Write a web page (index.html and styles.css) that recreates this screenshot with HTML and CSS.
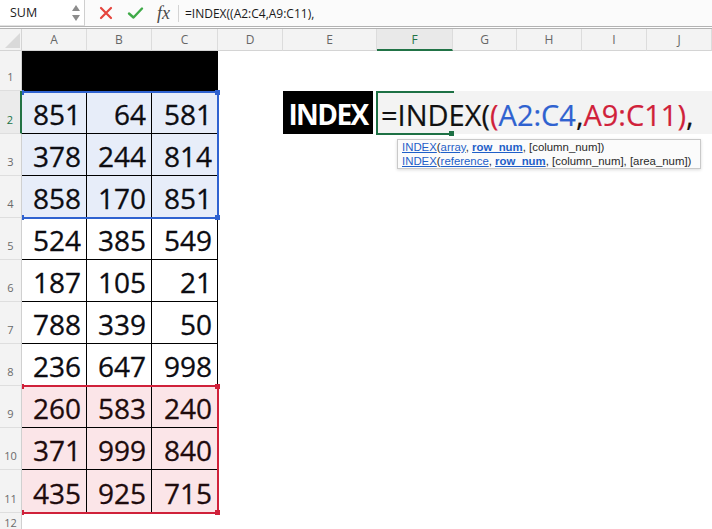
FILE: index.html
```html
<!DOCTYPE html>
<html>
<head>
<meta charset="utf-8">
<link rel="stylesheet" href="styles.css">
</head>
<body>
<div class="fbar">
  <div class="namebox">
    <span class="nm">SUM</span>
    <svg class="spin" width="10" height="22" viewBox="0 0 10 22"><polygon points="1,9 5,3 9,9" fill="#8c8c8c"/><polygon points="1,13 9,13 5,19" fill="#8c8c8c"/></svg>
  </div>
  <svg class="xicon" width="14" height="14" viewBox="0 0 14 14"><path d="M2 2 L12 12 M12 2 L2 12" stroke="#e5453d" stroke-width="2.2" stroke-linecap="round" fill="none"/></svg>
  <svg class="check" width="17" height="14" viewBox="0 0 17 14"><path d="M2 7.5 L6.5 11.5 L15 2.5" stroke="#3faa48" stroke-width="2.4" stroke-linecap="round" stroke-linejoin="round" fill="none"/></svg>
  <span class="fx">fx</span>
  <span class="sep"></span>
  <span class="ftext">=INDEX((A2:C4,A9:C11),</span>
</div>

<div class="sheet">
  <div class="row hdr">
    <div class="corner"><svg width="22" height="21" viewBox="0 0 22 21"><polygon points="5,19 20,19 20,4" fill="#d9d9d9"/></svg></div>
    <div class="ch">A</div><div class="ch">B</div><div class="ch">C</div><div class="ch">D</div><div class="ch">E</div><div class="ch act">F</div><div class="ch">G</div><div class="ch">H</div><div class="ch">I</div><div class="ch">J</div>
  </div>

  <div class="row r1">
    <div class="rh">1</div><div class="c blk"></div><div class="c blk"></div><div class="c blk"></div><div class="c"></div><div class="c"></div><div class="c"></div><div class="c"></div><div class="c"></div><div class="c"></div><div class="c"></div>
  </div>

  <div class="row r43">
    <div class="rh act">2</div><div class="c num bl">851</div><div class="c num bl">64</div><div class="c num bl">581</div><div class="c"></div><div class="c title">INDEX</div><div class="c"></div><div class="c"></div><div class="c"></div><div class="c"></div><div class="c"></div>
  </div>
  <div class="row r42">
    <div class="rh">3</div><div class="c num bl">378</div><div class="c num bl">244</div><div class="c num bl">814</div><div class="c"></div><div class="c"></div><div class="c"></div><div class="c"></div><div class="c"></div><div class="c"></div><div class="c"></div>
  </div>
  <div class="row r42">
    <div class="rh">4</div><div class="c num bl">858</div><div class="c num bl">170</div><div class="c num bl">851</div><div class="c"></div><div class="c"></div><div class="c"></div><div class="c"></div><div class="c"></div><div class="c"></div><div class="c"></div>
  </div>
  <div class="row r42">
    <div class="rh">5</div><div class="c num">524</div><div class="c num">385</div><div class="c num">549</div><div class="c"></div><div class="c"></div><div class="c"></div><div class="c"></div><div class="c"></div><div class="c"></div><div class="c"></div>
  </div>
  <div class="row r42">
    <div class="rh">6</div><div class="c num">187</div><div class="c num">105</div><div class="c num">21</div><div class="c"></div><div class="c"></div><div class="c"></div><div class="c"></div><div class="c"></div><div class="c"></div><div class="c"></div>
  </div>
  <div class="row r42">
    <div class="rh">7</div><div class="c num">788</div><div class="c num">339</div><div class="c num">50</div><div class="c"></div><div class="c"></div><div class="c"></div><div class="c"></div><div class="c"></div><div class="c"></div><div class="c"></div>
  </div>
  <div class="row r42">
    <div class="rh">8</div><div class="c num">236</div><div class="c num">647</div><div class="c num">998</div><div class="c"></div><div class="c"></div><div class="c"></div><div class="c"></div><div class="c"></div><div class="c"></div><div class="c"></div>
  </div>
  <div class="row r42">
    <div class="rh">9</div><div class="c num pk">260</div><div class="c num pk">583</div><div class="c num pk">240</div><div class="c"></div><div class="c"></div><div class="c"></div><div class="c"></div><div class="c"></div><div class="c"></div><div class="c"></div>
  </div>
  <div class="row r42">
    <div class="rh">10</div><div class="c num pk">371</div><div class="c num pk">999</div><div class="c num pk">840</div><div class="c"></div><div class="c"></div><div class="c"></div><div class="c"></div><div class="c"></div><div class="c"></div><div class="c"></div>
  </div>
  <div class="row r43">
    <div class="rh">11</div><div class="c num pk">435</div><div class="c num pk">925</div><div class="c num pk">715</div><div class="c"></div><div class="c"></div><div class="c"></div><div class="c"></div><div class="c"></div><div class="c"></div><div class="c"></div>
  </div>
  <div class="row r12">
    <div class="rh last">12</div>
  </div>
</div>

<div class="range blue"><span class="h tl"></span><span class="h tr"></span><span class="h bl2"></span><span class="h br"></span></div>
<div class="range red"><span class="h tl"></span><span class="h tr"></span><span class="h bl2"></span><span class="h br"></span></div>

<div class="editor"><span class="e-k">=INDEX(</span><span class="e-r">(</span><span class="e-b">A2:C4</span><span class="e-k">,</span><span class="e-r">A9:C11)</span><span class="e-k">,</span></div>
<div class="f2sel"><span class="fh"></span></div>

<div class="tip">
  <div class="tl-line"><a class="lk">INDEX</a>(<a class="lk">array</a>, <a class="lk b">row_num</a>, [column_num])</div>
  <div class="tl-line"><a class="lk">INDEX</a>(<a class="lk">reference</a>, <a class="lk b">row_num</a>, [column_num], [area_num])</div>
</div>
</body>
</html>
```

FILE: styles.css
```css
* { box-sizing: border-box; }
html, body { margin: 0; padding: 0; }
body {
  width: 712px;
  height: 529px;
  overflow: hidden;
  background: #fff;
  font-family: "Open Sans", "Liberation Sans", sans-serif;
  color: #111;
}

/* formula bar */
.fbar {
  height: 27px;
  background: #fbfbfb;
  border-bottom: 1px solid #b3b3b3;
  display: flex;
  align-items: center;
}
.namebox {
  width: 85px;
  height: 26px;
  background: #fff;
  border-right: 1px solid #cfcfcf;
  border-bottom: 1px solid #e2e2e2;
  display: flex;
  align-items: center;
  padding-left: 10px;
  align-self: flex-start;
}
.nm { font-size: 12.5px; color: #222; flex: 1; }
.spin { margin-right: 3px; }
.xicon { margin-left: 14px; }
.check { margin-left: 14px; }
.fx {
  margin-left: 13px;
  font-family: "Liberation Serif", serif;
  font-style: italic;
  font-size: 18px;
  color: #4a4a4a;
  line-height: 1;
}
.sep {
  width: 1px;
  height: 17px;
  background: #d4d4d4;
  margin-left: 8px;
}
.ftext {
  margin-left: 6px;
  font-size: 12px;
  color: #1a1a1a;
}

/* sheet */
.sheet { margin-top: 1px; border-top: 1px solid #b3b3b3; }
.row {
  display: grid;
  grid-template-columns: 22px 65px 65px 66px 65px 94px 76px 64px 65px 65px 65px;
}
.hdr { height: 22px; }
.r1 { height: 40px; }
.r42 { height: 42px; }
.r43 { height: 43px; }
.r12 { height: 17px; }

.corner {
  background: #f3f3f3;
  border-right: 1px solid #d4d4d4;
  border-bottom: 1px solid #d4d4d4;
}
.corner svg { display: block; }
.ch {
  background: #f3f3f3;
  border-right: 1px solid #dcdcdc;
  border-bottom: 1px solid #d4d4d4;
  font-size: 12px;
  color: #666;
  display: flex;
  align-items: center;
  justify-content: center;
}
.ch.act {
  background: #e9e9e9;
  color: #217346;
  border-bottom: 2px solid #217346;
}

.rh {
  background: #f3f3f3;
  border-right: 1px solid #d0d0d0;
  border-bottom: 1px solid #dedede;
  font-size: 11px;
  line-height: 13px;
  color: #6a6a6a;
  display: flex;
  align-items: flex-end;
  justify-content: center;
  padding-bottom: 7px;
}
.rh.act {
  color: #217346;
  background: #ebebeb;
  border-right: 2px solid #217346;
}
.rh.last { align-items: flex-start; padding-top: 3px; padding-bottom: 0; border-bottom: none; }

.c { min-width: 0; }
.blk { background: #000; }
.num {
  border-right: 1px solid #000;
  border-bottom: 1px solid #000;
  font-size: 28px;
  display: flex;
  align-items: center;
  justify-content: flex-end;
  padding-right: 5px;
  padding-top: 3px;
  color: #0c0c12;
  -webkit-text-stroke: 0.3px currentColor;
}
.bl { background: #e7edf9; }
.pk { background: #fbe5e8; color: #1e0b0d; }

.title {
  background: #000;
  color: #fff;
  font-weight: 700;
  font-size: 28px;
  letter-spacing: -1.6px;
  display: flex;
  align-items: center;
  justify-content: center;
  border-right: 4px solid #fff;
  padding-top: 2px;
}

/* range highlights (overlays) */
.range {
  position: absolute;
  left: 22px;
  width: 197px;
  border-style: solid;
  border-width: 2px 2px 2px 0;
}
.blue { top: 91px; height: 128px; border-color: #2f62d0; }
.red { top: 385px; height: 129px; border-color: #d0213a; }
.h { position: absolute; width: 5px; height: 5px; }
.blue .h { background: #2f62d0; }
.red .h { background: #d0213a; }
.h.tl { left: 0; top: -3px; width: 2px; height: 5px; }
.h.bl2 { left: 0; bottom: -3px; width: 2px; height: 5px; }
.h.tr { right: -3px; top: -3px; }
.h.br { right: -3px; bottom: -3px; }

/* in-cell editor */
.editor {
  position: absolute;
  left: 376px;
  top: 91px;
  width: 336px;
  height: 43px;
  background: #f3f3f3;
  font-size: 29px;
  padding-left: 5px;
  padding-top: 3px;
  display: flex;
  align-items: center;
  white-space: nowrap;
  -webkit-text-stroke: 0.2px currentColor;
}
.e-k { color: #111; }
.e-r { color: #d0213a; }
.e-b { color: #2f62d0; }
.f2sel {
  position: absolute;
  left: 376px;
  top: 91px;
  width: 78px;
  height: 44px;
  border: 2px solid #1e7145;
  border-right: none;
}
.fh {
  position: absolute;
  right: 0;
  bottom: -3px;
  width: 5px;
  height: 5px;
  background: #1e7145;
}

/* tooltip */
.tip {
  position: absolute;
  left: 397px;
  top: 139px;
  width: 304px;
  height: 30px;
  background: #fbfbfb;
  border: 1px solid #c9c9c9;
  box-shadow: 0 1px 3px rgba(0,0,0,0.15);
  padding-left: 4px;
  font-family: "Liberation Sans", Arial, sans-serif;
  font-size: 11.4px;
  color: #2a2a2a;
}
.tl-line { line-height: 14px; white-space: nowrap; }
.lk { color: #1f5fc8; text-decoration: underline; }
.lk.b { font-weight: 700; }
```
